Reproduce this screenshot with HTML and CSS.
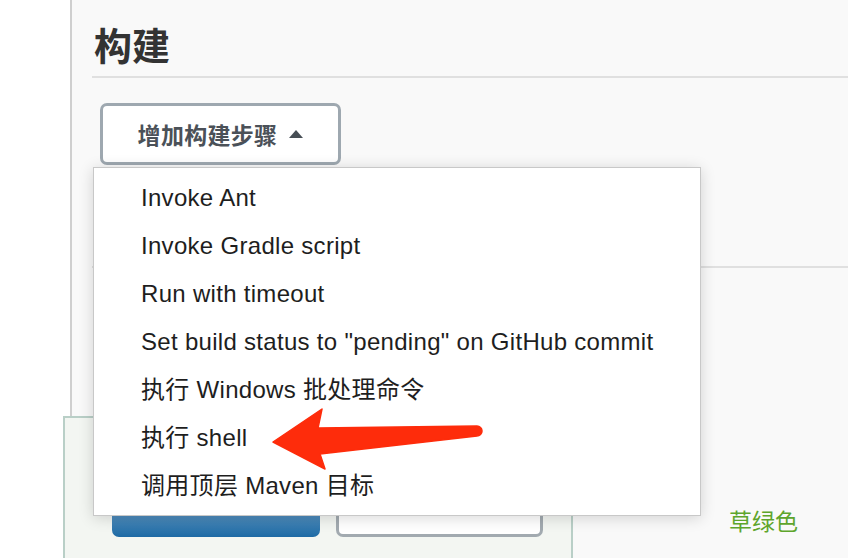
FILE: index.html
```html
<!DOCTYPE html>
<html lang="zh-CN">
<head>
<meta charset="utf-8">
<title>构建</title>
<link rel="stylesheet" href="styles.css">
</head>
<body>
<div class="page">
  <div class="panel">
    <section class="build">
      <h2 class="title">构建</h2>
      <div class="rule"></div>
      <div class="adder">
        <button class="add-btn" type="button">增加构建步骤<span class="caret"></span></button>
        <ul class="menu">
          <li>Invoke Ant</li>
          <li>Invoke Gradle script</li>
          <li>Run with timeout</li>
          <li>Set build status to "pending" on GitHub commit</li>
          <li>执行 Windows 批处理命令</li>
          <li>执行 shell</li>
          <li>调用顶层 Maven 目标</li>
        </ul>
      </div>
      <div class="rule rule-next"></div>
    </section>
    <div class="bottom-row">
      <div class="form-box">
        <div class="btn-row">
          <span class="btn-primary"></span>
          <span class="btn-secondary"></span>
        </div>
      </div>
      <div class="note">草绿色</div>
    </div>
  </div>
  <svg class="arrow" width="240" height="80" viewBox="0 0 240 80">
    <path d="M13 42 L62 9 L58 28 L217 26 A5 5 0 0 1 217 36 L60 54 L65 69 Z" fill="#fe2c0b" stroke="#fe2c0b" stroke-width="1.5" stroke-linejoin="round"/>
  </svg>
</div>
</body>
</html>
```
FILE: styles.css
```css
html, body {
  margin: 0;
  padding: 0;
  background: #ffffff;
}
body {
  font-family: "Liberation Sans", "Noto Sans CJK SC", sans-serif;
  color: #222;
  width: 848px;
  height: 558px;
  overflow: hidden;
}
.page {
  position: relative;
  height: 558px;
}
.panel {
  margin-left: 70px;
  border-left: 2px solid #cfcfcf;
  background: #f9f9f9;
  height: 558px;
  box-sizing: border-box;
  padding-top: 20px;
}
.build {
  padding-left: 20px;
}
.title {
  margin: 0 0 0 2px;
  font-family: "Noto Sans CJK SC", sans-serif;
  font-size: 38px;
  line-height: 48px;
  font-weight: 700;
  color: #333;
}
.rule {
  height: 2px;
  background: #e0e0e0;
  margin-top: 8px;
}
.adder {
  position: relative;
  margin-top: 25px;
  margin-left: 8px;
  width: 241px;
}
.add-btn {
  display: flex;
  align-items: center;
  justify-content: center;
  gap: 10px;
  width: 241px;
  height: 62px;
  box-sizing: border-box;
  border: 3px solid #9ea8b0;
  border-radius: 7px;
  background: #fff;
  font-family: "Noto Sans CJK SC", sans-serif;
  font-size: 23px;
  font-weight: 700;
  color: #4b5158;
  padding: 0;
  letter-spacing: 0.3px;
}
.caret {
  width: 0;
  height: 0;
  border-left: 7.5px solid transparent;
  border-right: 7.5px solid transparent;
  border-bottom: 8px solid #474e55;
  margin-left: 2px;
}
.menu {
  position: absolute;
  left: -7px;
  top: 64px;
  width: 608px;
  height: 349px;
  box-sizing: border-box;
  margin: 0;
  padding: 6px 0 0 0;
  list-style: none;
  background: #fff;
  border: 1px solid #c8c8c8;
  box-shadow: 0 2px 14px rgba(0, 0, 0, 0.16);
  z-index: 5;
}
.menu li {
  padding-left: 47px;
  height: 48px;
  line-height: 48px;
  font-size: 24px;
  letter-spacing: 0.3px;
  color: #1e1e1e;
  white-space: nowrap;
}
.rule-next {
  margin-top: 101px;
}
.bottom-row {
  display: flex;
  align-items: flex-start;
  margin-top: 148px;
  margin-left: -9px;
}
.form-box {
  width: 510px;
  height: 160px;
  box-sizing: border-box;
  border: 2px solid #b9cfc7;
  background: #f3f6f2;
  padding: 79px 0 0 47px;
}
.btn-row {
  display: flex;
  gap: 16px;
}
.btn-primary {
  display: block;
  width: 208px;
  height: 40px;
  border-radius: 7px;
  background: linear-gradient(#7aaad0, #1d6aa5);
}
.btn-secondary {
  display: block;
  width: 207px;
  height: 40px;
  box-sizing: border-box;
  border: 3px solid #a2aab0;
  border-radius: 7px;
  background: #fff;
}
.note {
  margin-left: 156px;
  margin-top: 92px;
  font-family: "Noto Sans CJK SC", sans-serif;
  font-size: 23px;
  line-height: 24px;
  color: #5ea52c;
}
.arrow {
  position: absolute;
  left: 260px;
  top: 400px;
  z-index: 10;
}
```
